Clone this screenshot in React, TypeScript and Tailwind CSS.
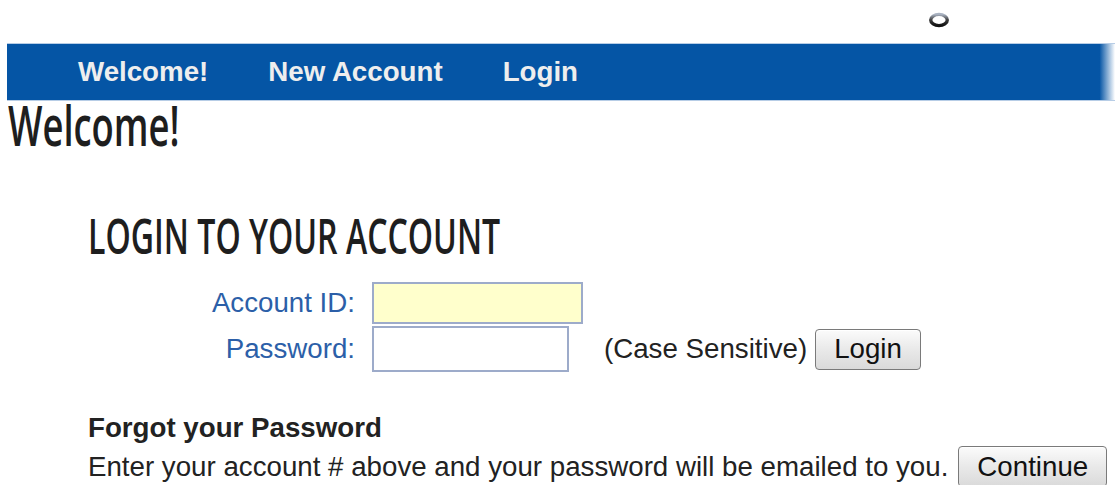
import React from "react";

function SpinnerRing() {
  return (
    <svg width="22" height="16" viewBox="0 0 22 16" aria-hidden="true">
      <defs>
        <linearGradient id="ringShade" x1="0" y1="0" x2="0" y2="1">
          <stop offset="0" stopColor="#aab3c2" />
          <stop offset="0.5" stopColor="#3c3c3c" />
          <stop offset="1" stopColor="#111111" />
        </linearGradient>
      </defs>
      <ellipse cx="11" cy="8" rx="8.3" ry="5.6" fill="#ffffff" stroke="url(#ringShade)" strokeWidth="3.4" />
    </svg>
  );
}

function GreyButton({ children }: { children: React.ReactNode }) {
  return (
    <button
      type="button"
      className="h-[41px] rounded-[4px] border border-[#7a7a7a] bg-[linear-gradient(to_bottom,#fbfbfb,#e9e9e9_50%,#dadada)] px-[18px] leading-none text-[#111] shadow-[inset_0_1px_0_#ffffff]"
    >
      {children}
    </button>
  );
}

export default function App() {
  return (
    <div className="h-[485px] w-[1115px] overflow-hidden bg-white font-['Liberation_Sans',Arial,sans-serif] text-[27.7px] text-[#222]">
      {/* top strip with the loading ring */}
      <div className="h-[43px] pl-[928px] pt-[12px]">
        <SpinnerRing />
      </div>

      {/* main navigation */}
      <nav className="ml-[7px] flex h-[58px] items-center gap-[60px] border-y border-[#b7cde6] bg-[linear-gradient(to_right,#0555a5_98.6%,#ffffff)] pl-[71px] font-bold text-[#eeeeee]">
        <span>Welcome!</span>
        <span>New Account</span>
        <span>Login</span>
      </nav>

      <h1 className="ml-[8px] h-[46px] origin-left scale-x-[0.65] font-['Open_Sans',sans-serif] text-[56px] font-semibold leading-[46px] text-[#1e1e1e]">
        Welcome!
      </h1>

      <section className="pl-[88px]">
        <h2 className="mt-[64px] h-[49px] origin-left scale-x-[0.655] font-['Open_Sans',sans-serif] text-[49px] font-semibold leading-[49px] text-[#1e1e1e]">
          LOGIN TO YOUR ACCOUNT
        </h2>

        <div className="mt-[22px] grid grid-cols-[267px_auto] items-center gap-x-[17px] gap-y-[2px] text-[#2c5fa8]">
          <label className="text-right">Account ID:</label>
          <div className="flex">
            <input className="h-[42px] w-[211px] border-2 border-[#9dabca] bg-[#ffffcc] outline-none" />
          </div>

          <label className="text-right">Password:</label>
          <div className="flex items-center">
            <input type="password" className="h-[46px] w-[197px] border-2 border-[#9dabca] bg-white outline-none" />
            <span className="ml-[35px] text-[#222]">(Case Sensitive)</span>
            <span className="ml-[8px]">
              <GreyButton>Login</GreyButton>
            </span>
          </div>
        </div>

        <h3 className="mt-[40px] font-bold leading-[32px] text-[#222]">Forgot your Password</h3>
        <div className="mt-[2px] flex items-center">
          <span>Enter your account # above and your password will be emailed to you.</span>
          <span className="ml-[10px]">
            <GreyButton>Continue</GreyButton>
          </span>
        </div>
      </section>
    </div>
  );
}
